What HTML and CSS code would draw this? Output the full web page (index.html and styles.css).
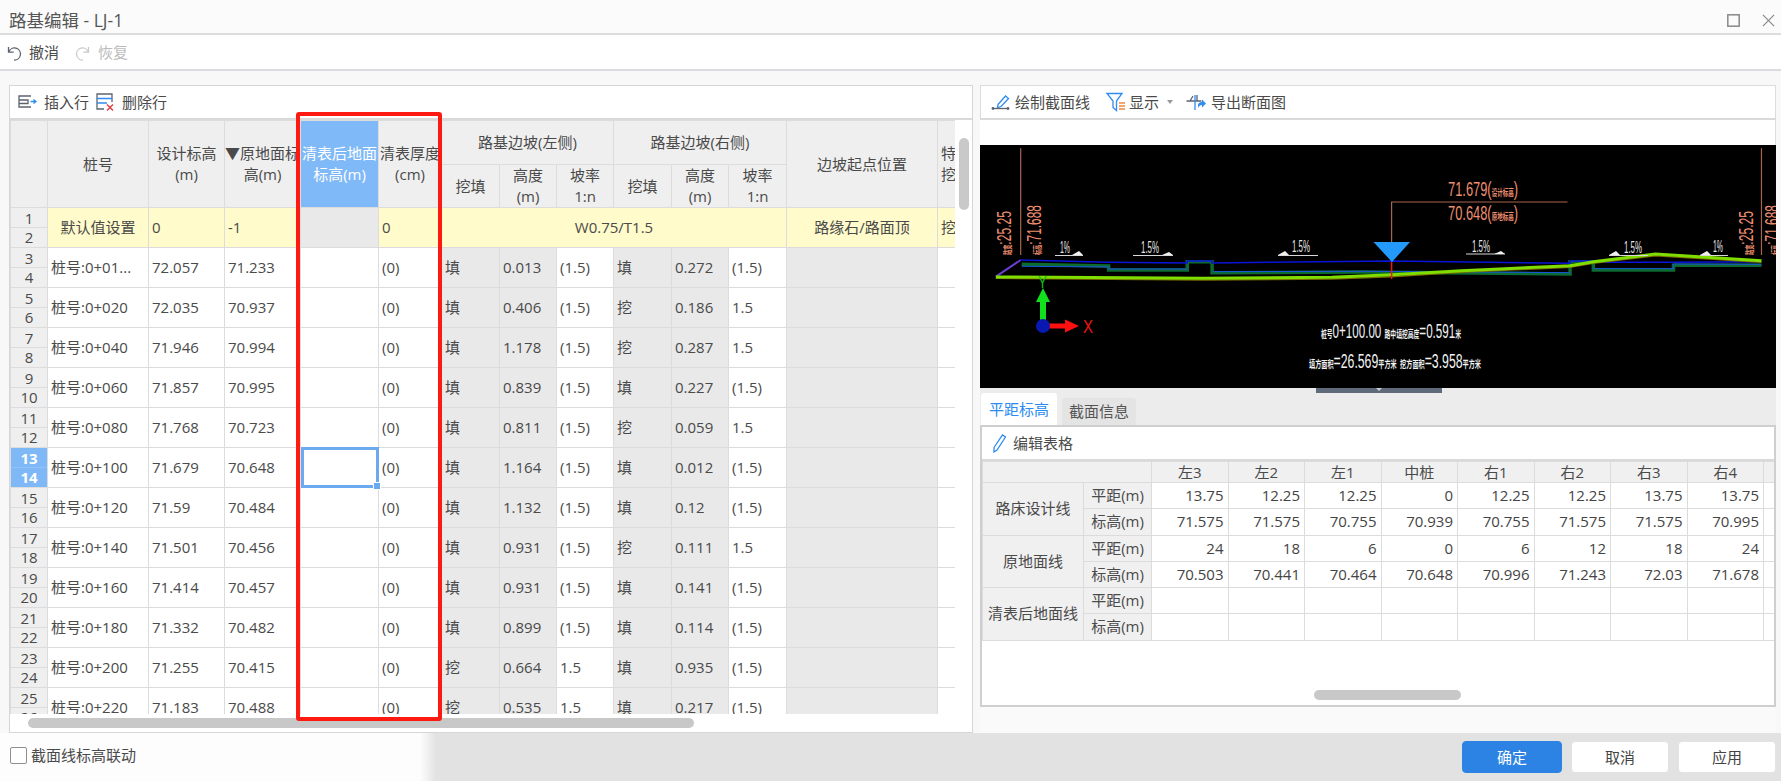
FILE: index.html
```html
<!DOCTYPE html>
<html lang="zh">
<head>
<meta charset="utf-8">
<title>路基编辑 - LJ-1</title>
<link rel="stylesheet" href="styles.css">
</head>
<body>
<div class="app">
  <header class="titlebar">
    <span class="title">路基编辑 - LJ-1</span>
    <div class="winbtns">
      <svg class="ico-max" viewBox="0 0 12 12"><rect x="0.75" y="0.75" width="10.5" height="10.5"/></svg>
      <svg class="ico-close" viewBox="0 0 14 14"><path d="M1 1L13 13M13 1L1 13"/></svg>
    </div>
  </header>
  <div class="undobar">
    <button class="tool">
      <svg class="ico16" viewBox="0 0 16 16"><path class="st-gray" d="M2.5 2v5.2h5.2M2.8 7A6 6 0 1 1 8 15"/></svg>
      <span>撤消</span>
    </button>
    <button class="tool off">
      <svg class="ico16" viewBox="0 0 16 16"><path class="st-light" d="M13.5 2v5.2H8.3M13.2 7A6 6 0 1 0 8 15"/></svg>
      <span>恢复</span>
    </button>
  </div>

  <main class="main">
    <section class="left">
      <div class="lbar">
        <button class="tool t-ins">
          <svg class="ico20" viewBox="0 0 20 16"><path class="st-gray" d="M14 2H2v11h12M2 6h9v3.500H2"/><path class="st-blue" d="M13.500 7.500h5M16.500 5.500l2.500 2-2.500 2"/></svg>
          <span>插入行</span>
        </button>
        <button class="tool t-del">
          <svg class="ico20" viewBox="0 0 20 20"><path class="st-gray" d="M9 17H2V2h15v8"/><path class="st-blue" d="M2 6.500h15M2 11h10"/><path class="st-red" d="M12 12.500l6 6M18 12.500l-6 6"/></svg>
          <span>删除行</span>
        </button>
      </div>
      <div class="gridwrap">
        <table class="grid">
          <colgroup>
            <col class="c-idx"><col class="c-zh"><col class="c-76"><col class="c-76"><col class="c-78"><col class="c-63">
            <col class="c-58"><col class="c-57"><col class="c-57"><col class="c-58"><col class="c-57"><col class="c-58"><col class="c-151"><col class="c-60">
          </colgroup>
          <thead>
            <tr class="hr1">
              <th rowspan="2"></th>
              <th rowspan="2">桩号</th>
              <th rowspan="2">设计标高<br>(m)</th>
              <th rowspan="2">▼原地面标<br>高(m)</th>
              <th rowspan="2" class="sel-h">清表后地面<br>标高(m)</th>
              <th rowspan="2">清表厚度<br>(cm)</th>
              <th colspan="3">路基边坡(左侧)</th>
              <th colspan="3">路基边坡(右侧)</th>
              <th rowspan="2">边坡起点位置</th>
              <th rowspan="2" class="lh">特殊<br>挖方</th>
            </tr>
            <tr class="hr2">
              <th>挖填</th><th>高度<br>(m)</th><th>坡率<br>1:n</th>
              <th>挖填</th><th>高度<br>(m)</th><th>坡率<br>1:n</th>
            </tr>
          </thead>
          <tbody>
            <tr class="def">
              <td class="idx"><div class="n">1</div><div class="n">2</div></td>
              <td class="ct">默认值设置</td><td>0</td><td>-1</td><td class="g"></td><td>0</td>
              <td colspan="6" class="ct">W0.75/T1.5</td><td class="ct">路缘石/路面顶</td><td>挖</td>
            </tr>
            <tr><td class="idx"><div class="n">3</div><div class="n">4</div></td><td>桩号:0+01...</td><td>72.057</td><td>71.233</td><td></td><td>(0)</td><td class="g">填</td><td class="g">0.013</td><td>(1.5)</td><td class="g">填</td><td class="g">0.272</td><td>(1.5)</td><td class="g"></td><td></td></tr>
            <tr><td class="idx"><div class="n">5</div><div class="n">6</div></td><td>桩号:0+020</td><td>72.035</td><td>70.937</td><td></td><td>(0)</td><td class="g">填</td><td class="g">0.406</td><td>(1.5)</td><td class="g">挖</td><td class="g">0.186</td><td>1.5</td><td class="g"></td><td></td></tr>
            <tr><td class="idx"><div class="n">7</div><div class="n">8</div></td><td>桩号:0+040</td><td>71.946</td><td>70.994</td><td></td><td>(0)</td><td class="g">填</td><td class="g">1.178</td><td>(1.5)</td><td class="g">挖</td><td class="g">0.287</td><td>1.5</td><td class="g"></td><td></td></tr>
            <tr><td class="idx"><div class="n">9</div><div class="n">10</div></td><td>桩号:0+060</td><td>71.857</td><td>70.995</td><td></td><td>(0)</td><td class="g">填</td><td class="g">0.839</td><td>(1.5)</td><td class="g">填</td><td class="g">0.227</td><td>(1.5)</td><td class="g"></td><td></td></tr>
            <tr><td class="idx"><div class="n">11</div><div class="n">12</div></td><td>桩号:0+080</td><td>71.768</td><td>70.723</td><td></td><td>(0)</td><td class="g">填</td><td class="g">0.811</td><td>(1.5)</td><td class="g">挖</td><td class="g">0.059</td><td>1.5</td><td class="g"></td><td></td></tr>
            <tr><td class="idx on"><div class="n">13</div><div class="n">14</div></td><td>桩号:0+100</td><td>71.679</td><td>70.648</td><td class="cur"><span class="cursor"></span></td><td>(0)</td><td class="g">填</td><td class="g">1.164</td><td>(1.5)</td><td class="g">填</td><td class="g">0.012</td><td>(1.5)</td><td class="g"></td><td></td></tr>
            <tr><td class="idx"><div class="n">15</div><div class="n">16</div></td><td>桩号:0+120</td><td>71.59</td><td>70.484</td><td></td><td>(0)</td><td class="g">填</td><td class="g">1.132</td><td>(1.5)</td><td class="g">填</td><td class="g">0.12</td><td>(1.5)</td><td class="g"></td><td></td></tr>
            <tr><td class="idx"><div class="n">17</div><div class="n">18</div></td><td>桩号:0+140</td><td>71.501</td><td>70.456</td><td></td><td>(0)</td><td class="g">填</td><td class="g">0.931</td><td>(1.5)</td><td class="g">挖</td><td class="g">0.111</td><td>1.5</td><td class="g"></td><td></td></tr>
            <tr><td class="idx"><div class="n">19</div><div class="n">20</div></td><td>桩号:0+160</td><td>71.414</td><td>70.457</td><td></td><td>(0)</td><td class="g">填</td><td class="g">0.931</td><td>(1.5)</td><td class="g">填</td><td class="g">0.141</td><td>(1.5)</td><td class="g"></td><td></td></tr>
            <tr><td class="idx"><div class="n">21</div><div class="n">22</div></td><td>桩号:0+180</td><td>71.332</td><td>70.482</td><td></td><td>(0)</td><td class="g">填</td><td class="g">0.899</td><td>(1.5)</td><td class="g">填</td><td class="g">0.114</td><td>(1.5)</td><td class="g"></td><td></td></tr>
            <tr><td class="idx"><div class="n">23</div><div class="n">24</div></td><td>桩号:0+200</td><td>71.255</td><td>70.415</td><td></td><td>(0)</td><td class="g">挖</td><td class="g">0.664</td><td>1.5</td><td class="g">填</td><td class="g">0.935</td><td>(1.5)</td><td class="g"></td><td></td></tr>
            <tr><td class="idx"><div class="n">25</div><div class="n">26</div></td><td>桩号:0+220</td><td>71.183</td><td>70.488</td><td></td><td>(0)</td><td class="g">挖</td><td class="g">0.535</td><td>1.5</td><td class="g">填</td><td class="g">0.217</td><td>(1.5)</td><td class="g"></td><td></td></tr>
          </tbody>
        </table>
      </div>
      <div class="sb-v"></div>
      <div class="sb-h"></div>
      <div class="redbox"></div>
    </section>

    <section class="right">
      <div class="rbar">
        <button class="tool t-draw">
          <svg class="ico20" viewBox="0 0 20 16"><path class="st-blue" d="M7 10.500L14.500 2l3 2.500L10 12.500l-3.500 1z"/><path class="st-gray" d="M2 14.500h15"/><circle class="dot" cx="2" cy="14.500" r="1.400"/><circle class="dot" cx="17" cy="14.500" r="1.400"/></svg>
          <span>绘制截面线</span>
        </button>
        <button class="tool t-show">
          <svg class="ico20" viewBox="0 0 20 20"><path class="st-blue" d="M1 1.500h15L10.500 9v9.500L7 15.500V9z"/><path class="st-orange" d="M13 11h6M13 14h6M13 17h6"/></svg>
          <span>显示</span>
          <i class="caret"></i>
        </button>
        <button class="tool t-exp">
          <svg class="ico20" viewBox="0 0 20 20"><path class="st-gray" d="M0.500 9h15M4 9l3-5M11 9V3"/><path class="st-blue" d="M9 3v15"/><path class="fill-blue" d="M12 16v-3c0-2 2-3 4-3V7.500l4 4-4 4V13c-2 0-3 1-4 3z"/></svg>
          <span>导出断面图</span>
        </button>
      </div>
      <div class="strip"></div>
      <div class="cad">
        <svg class="cadsvg" viewBox="0 0 796 243">
          <g transform="translate(-10 -65) scale(.5173 .3333)">
            <path class="l ln" d="M98 205V525M1530 205V525M815 545V366H1155"/>
            <path class="l l-purple" d="M50 590L98 540"/>
            <path class="l l-dk" d="M100 553L268 558V570H420V545H468V578L760 576L1160 582V545H1205V570H1360V556L1530 556"/>
            <path class="l l-bl2" d="M100 559L268 561V567H420M470 575L760 574L1160 578M1205 566H1360V552L1530 553"/>
            <path class="l l-bl" d="M98 540L268 547L420 549V543H468V549L815 543L1160 550V543H1205V547H1360L1530 545"/>
            <path class="l l-ol" d="M50 595L450 600L700 597L815 590L950 577L1160 562L1205 550L1325 527L1530 547"/>
            <path class="l l-gr" d="M50 591L450 595L700 592L815 584L950 572L1160 557L1205 545L1325 522L1530 542"/>
            <path class="l l-red" d="M815 545V597"/>
          </g>
          <polygon class="f-tri" points="393.500,97 430,97 412,117"/>
          <g class="salmon">
            <text x="468" y="51" textLength="70" lengthAdjust="spacingAndGlyphs">71.679(<tspan class="tiny">设计标高</tspan>)</text>
            <text x="468" y="75" textLength="70" lengthAdjust="spacingAndGlyphs">70.648(<tspan class="tiny">原地标高</tspan>)</text>
            <text transform="translate(31 110) rotate(-90)" textLength="44" lengthAdjust="spacingAndGlyphs"><tspan class="tiny">路宽</tspan>:25.25</text>
            <text transform="translate(61 110) rotate(-90)" textLength="50" lengthAdjust="spacingAndGlyphs"><tspan class="tiny">标高</tspan>:71.688</text>
            <text transform="translate(773 110) rotate(-90)" textLength="44" lengthAdjust="spacingAndGlyphs"><tspan class="tiny">路宽</tspan>:25.25</text>
            <text transform="translate(799 110) rotate(-90)" textLength="50" lengthAdjust="spacingAndGlyphs"><tspan class="tiny">标高</tspan>:71.688</text>
          </g>
          <g class="slope">
            <text x="80" y="108" textLength="10" lengthAdjust="spacingAndGlyphs">1%</text>
            <text x="161" y="108" textLength="18" lengthAdjust="spacingAndGlyphs">1.5%</text>
            <text x="312" y="107" textLength="18" lengthAdjust="spacingAndGlyphs">1.5%</text>
            <text x="492" y="107" textLength="18" lengthAdjust="spacingAndGlyphs">1.5%</text>
            <text x="644" y="108" textLength="18" lengthAdjust="spacingAndGlyphs">1.5%</text>
            <text x="733" y="107" textLength="10" lengthAdjust="spacingAndGlyphs">1%</text>
          </g>
          <path class="under" d="M75 110.500H103M153 110.500H193M298 110.500H338M486 109H525M629 110.500H668M720 110.500H748"/>
          <path class="wtri" d="M92 110L99 106L103 110zM182 110L189 107L193 110zM298 110L305 106L309 110zM514 109L521 106L525 109zM629 110L636 106L640 110zM720 110L727 106L731 110z"/>
          <rect class="f-green" x="60" y="156" width="6" height="20"/>
          <polygon class="f-green" points="63,143 56,157 70,157"/>
          <rect class="f-red" x="68" y="178.500" width="19" height="5"/>
          <polygon class="f-red" points="99,181 85,174.500 85,187.500"/>
          <circle class="f-dot" cx="63" cy="181" r="7"/>
          <text class="axis-y" x="58" y="143" textLength="9" lengthAdjust="spacingAndGlyphs">Y</text>
          <text class="axis-x" x="103" y="188" textLength="10" lengthAdjust="spacingAndGlyphs">X</text>
          <g class="info">
            <text x="341" y="193" textLength="140" lengthAdjust="spacingAndGlyphs"><tspan class="cap">桩号</tspan>0+100.00 <tspan class="cap">路中填挖高度</tspan>=0.591<tspan class="cap">米</tspan></text>
            <text x="329" y="223" textLength="172" lengthAdjust="spacingAndGlyphs"><tspan class="cap">填方面积</tspan>=26.569<tspan class="cap">平方米</tspan> <tspan class="cap">挖方面积</tspan>=3.958<tspan class="cap">平方米</tspan></text>
          </g>
        </svg>
        <div class="handle"><i></i></div>
      </div>
      <div class="tabs">
        <div class="tab act">平距标高</div>
        <div class="tab">截面信息</div>
      </div>
      <div class="tabbody">
        <div class="ebar">
          <button class="tool t-edit">
            <svg class="ico20" viewBox="0 0 16 20"><path class="st-blue" d="M2 14.500L10.500 2l3 2L5 17l-3 2z"/></svg>
            <span>编辑表格</span>
          </button>
        </div>
        <table class="ptable">
          <colgroup>
            <col class="p-a"><col class="p-b"><col class="p-n"><col class="p-n"><col class="p-n"><col class="p-n"><col class="p-n"><col class="p-n"><col class="p-n"><col class="p-n"><col class="p-z">
          </colgroup>
          <thead>
            <tr><th colspan="2"></th><th>左3</th><th>左2</th><th>左1</th><th>中桩</th><th>右1</th><th>右2</th><th>右3</th><th>右4</th><th></th></tr>
          </thead>
          <tbody>
            <tr><th rowspan="2">路床设计线</th><th>平距(m)</th><td>13.75</td><td>12.25</td><td>12.25</td><td>0</td><td>12.25</td><td>12.25</td><td>13.75</td><td>13.75</td><td></td></tr>
            <tr><th>标高(m)</th><td>71.575</td><td>71.575</td><td>70.755</td><td>70.939</td><td>70.755</td><td>71.575</td><td>71.575</td><td>70.995</td><td></td></tr>
            <tr><th rowspan="2">原地面线</th><th>平距(m)</th><td>24</td><td>18</td><td>6</td><td>0</td><td>6</td><td>12</td><td>18</td><td>24</td><td></td></tr>
            <tr><th>标高(m)</th><td>70.503</td><td>70.441</td><td>70.464</td><td>70.648</td><td>70.996</td><td>71.243</td><td>72.03</td><td>71.678</td><td></td></tr>
            <tr><th rowspan="2">清表后地面线</th><th>平距(m)</th><td></td><td></td><td></td><td></td><td></td><td></td><td></td><td></td><td></td></tr>
            <tr><th>标高(m)</th><td></td><td></td><td></td><td></td><td></td><td></td><td></td><td></td><td></td></tr>
          </tbody>
        </table>
        <div class="sb-p"></div>
      </div>
      <div class="rfoot"></div>
    </section>
  </main>

  <footer class="footer">
    <label class="chk"><i class="box"></i><span>截面线标高联动</span></label>
    <div class="btns">
      <button class="btn pri">确定</button>
      <button class="btn">取消</button>
      <button class="btn">应用</button>
    </div>
  </footer>
</div>
</body>
</html>
```
FILE: styles.css
```css
* { box-sizing: border-box; }
html, body { margin: 0; padding: 0; background: #f8f8f8; }
body { font: 15px/21px "Open Sans", "Noto Sans CJK SC", "Noto Sans", sans-serif; color: #4a4a4a; overflow: hidden; }
button { font: inherit; color: inherit; background: none; border: 0; padding: 0; }

.app { width: 1781px; height: 781px; display: flex; flex-direction: column; overflow: hidden; }

.titlebar { height: 35px; flex: none; display: flex; align-items: center; justify-content: space-between; padding: 8px 6px 0 9px; background: #fbfbfb; border-bottom: 2px solid #dcdcdc; }
.title { font-size: 17.500px; color: #555; }
.winbtns { display: flex; align-items: center; gap: 22px; }
.ico-max { width: 13px; height: 13px; fill: none; stroke: #8a8a8a; stroke-width: 1.400; }
.ico-close { width: 13px; height: 13px; fill: none; stroke: #8a8a8a; stroke-width: 1.300; }

.undobar { height: 36px; flex: none; display: flex; align-items: center; gap: 16px; padding: 1px 0 0 6px; background: #fff; border-bottom: 2px solid #dcdce0; }
.tool { display: inline-flex; align-items: center; gap: 7px; white-space: nowrap; }
.tool.off { color: #bcbcbc; }
.ico16 { width: 16px; height: 16px; flex: none; }
.ico20 { width: 20px; height: 20px; flex: none; }
.ico16 path, .ico20 path { fill: none; stroke-width: 1.300; }
.st-gray { stroke: #5c6370; }
.st-light { stroke: #c9c9c9; }
.st-blue { stroke: #2f8cf0; }
.st-red { stroke: #e8343a; stroke-width: 1.800; }
.st-orange { stroke: #f08a3c; stroke-width: 1.500; }
.dot { fill: #5c6370; }
.ico20 path.fill-blue { fill: #2f8cf0; stroke: none; }

.main { flex: 1; min-height: 0; display: flex; align-items: flex-start; gap: 7px; padding: 14px 5px 0 9px; }

.left { position: relative; width: 964px; height: 648px; flex: none; background: #fff; border: 1px solid #d6d6d6; }
.lbar { height: 34px; display: flex; align-items: center; gap: 6px; padding-left: 7px; border-bottom: 2px solid #d9d9d9; }
.gridwrap { width: 945px; height: 594px; overflow: hidden; }

.grid { table-layout: fixed; border-collapse: collapse; width: 946px; }
.grid th, .grid td { border: 1px solid #dcdcdc; padding: 0 0 0 3px; white-space: nowrap; overflow: hidden; font-weight: 400; text-align: left; }
.grid th { background: #efefef; text-align: center; padding: 0; }
.grid th.lh { text-align: left; padding-left: 3px; }
.c-idx { width: 37px; } .c-zh { width: 101px; } .c-76 { width: 76px; } .c-78 { width: 78px; } .c-63 { width: 63px; }
.c-58 { width: 58px; } .c-57 { width: 57px; } .c-151 { width: 151px; } .c-60 { width: 18px; }
.hr1 { height: 44px; } .hr2 { height: 43px; }
.grid tbody tr { height: 40px; }
.grid .sel-h { background: #7fb9f8; color: #fff; }
.grid td.g { background: #e9e9e9; }
.grid .def td { background: #fffbcb; }
.grid .def td.g { background: #e9e9e9; }
.grid .def td.ct, .grid td.ct { text-align: center; padding: 0; }
.grid td.idx, .grid .def td.idx { padding: 0; background: #efefef; }
.n { height: 20px; line-height: 20px; text-align: center; }
.n:first-child { border-bottom: 1px solid #dcdcdc; }
.n:last-child { height: 19px; line-height: 19px; }
.grid td.on { background: #7eb8f7; color: #fff; font-weight: 700; }
.on .n:first-child { border-bottom-color: #8fc2f8; }
.grid td.cur { position: relative; overflow: visible; }
.cursor { position: absolute; inset: -1px -1px -1px 0; border: 3px solid #6caaf0; }
.cursor::after { content: ""; position: absolute; right: -5px; bottom: -5px; width: 6px; height: 6px; background: #6caaf0; border: 1px solid #fff; }

.sb-v { position: absolute; left: 949px; top: 52px; width: 10px; height: 72px; border-radius: 5px; background: #c9c9c9; }
.sb-h { position: absolute; left: 18px; top: 632px; width: 666px; height: 10px; border-radius: 5px; background: #c8c8c8; }
.redbox { position: absolute; left: 286px; top: 26px; width: 146px; height: 609px; border: 4px solid #fe1a10; border-radius: 3px; pointer-events: none; }

.right { width: 796px; height: 648px; flex: none; display: flex; flex-direction: column; background: #ececec; }
.rbar { height: 35px; flex: none; display: flex; align-items: center; padding-left: 10px; background: #fff; border: 1px solid #dcdcdc; border-bottom: 2px solid #d9d9d9; }
.t-draw { gap: 4px; }
.t-show { margin-left: 16px; gap: 3px; }
.caret { width: 0; height: 0; margin-left: 5px; border: 3px solid transparent; border-top: 4px solid #999; border-bottom: 0; }
.t-exp { margin-left: 13px; gap: 5px; }
.strip { height: 25px; flex: none; background: #fff; border-right: 1px solid #dcdcdc; }
.cad { position: relative; height: 243px; flex: none; background: #000; }
.cadsvg { display: block; width: 796px; height: 243px; font-family: "Liberation Sans", "Noto Sans CJK SC", sans-serif; }
.handle { position: absolute; left: 336px; bottom: -5px; width: 126px; height: 5px; background: #5f6b7a; display: flex; justify-content: center; }
.handle i { width: 0; height: 0; border: 3px solid transparent; border-top: 3px solid #c9ced6; border-bottom: 0; }

.l { fill: none; vector-effect: non-scaling-stroke; }
.ln { stroke: #a8654f; stroke-width: 1.200; }
.l-purple { stroke: #6a3fd0; stroke-width: 2; }
.l-dk { stroke: #0b6b30; stroke-width: 3.500; }
.l-bl2 { stroke: #1a55e0; stroke-width: 1; }
.l-bl { stroke: #0a14d8; stroke-width: 1.500; }
.l-ol { stroke: #7a6a00; stroke-width: 1.500; }
.l-gr { stroke: #7fdd00; stroke-width: 3; }
.l-red { stroke: #f01414; stroke-width: 1.500; }
.f-tri { fill: #2299fb; }
.salmon { fill: #ee8f6f; font-size: 21px; }
.tiny { font-size: 9px; font-weight: 700; }
.slope { fill: #e6e6e6; font-size: 17px; }
.under { fill: none; stroke: #d8d8d8; stroke-width: 1; }
.wtri { fill: #f0f0f0; }
.f-green { fill: #12e01c; }
.f-red { fill: #ff1010; }
.f-dot { fill: #0818b0; }
.axis-y { fill: #12c01c; font-size: 17px; }
.axis-x { fill: #f01414; font-size: 18px; }
.info { fill: #f2f2f2; font-size: 20px; }
.cap { font-size: 10px; font-weight: 700; }

.tabs { height: 32px; flex: none; margin-top: 5px; display: flex; align-items: flex-end; gap: 5px; padding-left: 1px; }
.tab { width: 74px; height: 27px; display: flex; align-items: center; justify-content: center; background: #e4e4e4; border-radius: 3px 3px 0 0; color: #555; }
.tab.act { width: 76px; height: 32px; background: #fff; color: #2a8cf0; }
.tabbody { position: relative; height: 282px; flex: none; background: #fff; border: 2px solid #cfcfd2; overflow: hidden; }
.ebar { height: 34px; display: flex; align-items: center; padding-left: 8px; border-bottom: 2px solid #d9d9d9; }
.t-edit { gap: 3px; }
.ptable { table-layout: fixed; border-collapse: collapse; width: 800px; }
.ptable th, .ptable td { border: 1px solid #dcdcdc; height: 26.250px; padding: 0; font-weight: 400; white-space: nowrap; overflow: hidden; }
.ptable th { background: #f0f0f0; text-align: center; }
.ptable td { text-align: right; padding-right: 4px; color: #444; }
.ptable thead th { height: 21px; line-height: 19px; }
.p-a { width: 101px; } .p-b { width: 68px; } .p-n { width: 76.500px; } .p-z { width: 30px; }
.sb-p { position: absolute; left: 332px; top: 263px; width: 147px; height: 10px; border-radius: 5px; background: #c8c8c8; }
.rfoot { flex: 1; background: #fafafa; }

.footer { height: 48px; flex: none; display: flex; align-items: center; justify-content: space-between; padding: 0 5px 0 10px; background: linear-gradient(90deg, #fdfdfd 0, #fdfdfd 420px, #e2e2e2 436px); }
.chk { display: inline-flex; align-items: center; gap: 4px; font-size: 15px; margin-bottom: 3px; }
.box { width: 17px; height: 17px; border: 1px solid #8f8f8f; border-radius: 2px; background: #fff; }
.btns { display: flex; gap: 9px; align-items: center; }
.btn { width: 98px; height: 32px; border-radius: 4px; background: #fff; border: 1px solid #e3e3e3; color: #444; }
.btn.pri { width: 100px; background: #2c83e4; border-color: #2c83e4; color: #fff; }
```
